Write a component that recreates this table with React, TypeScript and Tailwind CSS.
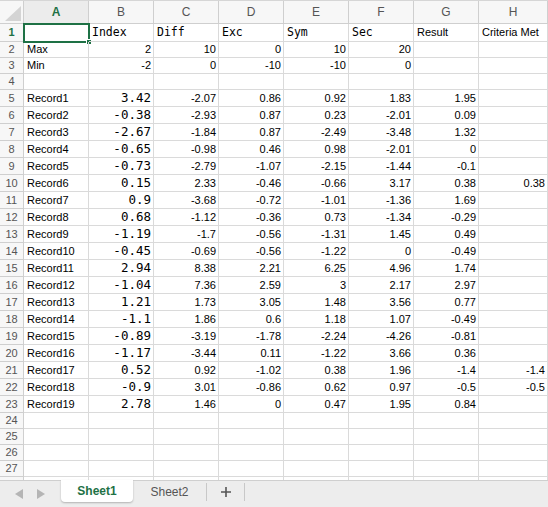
import React from 'react';

type Cell = { v: string; right?: boolean; mono?: boolean };

const colLetters = ['A', 'B', 'C', 'D', 'E', 'F', 'G', 'H'];
const colWidth = ['w-[65px]', 'w-[65px]', 'w-[65px]', 'w-[65px]', 'w-[65px]', 'w-[65px]', 'w-[65px]', 'w-[69px]'];

const records: string[][] = [
  ['3.42', '-2.07', '0.86', '0.92', '1.83', '1.95', ''],
  ['-0.38', '-2.93', '0.87', '0.23', '-2.01', '0.09', ''],
  ['-2.67', '-1.84', '0.87', '-2.49', '-3.48', '1.32', ''],
  ['-0.65', '-0.98', '0.46', '0.98', '-2.01', '0', ''],
  ['-0.73', '-2.79', '-1.07', '-2.15', '-1.44', '-0.1', ''],
  ['0.15', '2.33', '-0.46', '-0.66', '3.17', '0.38', '0.38'],
  ['0.9', '-3.68', '-0.72', '-1.01', '-1.36', '1.69', ''],
  ['0.68', '-1.12', '-0.36', '0.73', '-1.34', '-0.29', ''],
  ['-1.19', '-1.7', '-0.56', '-1.31', '1.45', '0.49', ''],
  ['-0.45', '-0.69', '-0.56', '-1.22', '0', '-0.49', ''],
  ['2.94', '8.38', '2.21', '6.25', '4.96', '1.74', ''],
  ['-1.04', '7.36', '2.59', '3', '2.17', '2.97', ''],
  ['1.21', '1.73', '3.05', '1.48', '3.56', '0.77', ''],
  ['-1.1', '1.86', '0.6', '1.18', '1.07', '-0.49', ''],
  ['-0.89', '-3.19', '-1.78', '-2.24', '-4.26', '-0.81', ''],
  ['-1.17', '-3.44', '0.11', '-1.22', '3.66', '0.36', ''],
  ['0.52', '0.92', '-1.02', '0.38', '1.96', '-1.4', '-1.4'],
  ['-0.9', '3.01', '-0.86', '0.62', '0.97', '-0.5', '-0.5'],
  ['2.78', '1.46', '0', '0.47', '1.95', '0.84', ''],
];

const blank = (): Cell[] => colLetters.map(() => ({ v: '' }));

const rows: { h: string; cells: Cell[]; label?: boolean }[] = [
  {
    h: 'h-[18px]',
    cells: [
      { v: '' },
      { v: 'Index', mono: true },
      { v: 'Diff', mono: true },
      { v: 'Exc', mono: true },
      { v: 'Sym', mono: true },
      { v: 'Sec', mono: true },
      { v: 'Result' },
      { v: 'Criteria Met' },
    ],
  },
  {
    h: 'h-[16px]',
    cells: [{ v: 'Max' }, ...['2', '10', '0', '10', '20'].map((v) => ({ v, right: true })), { v: '' }, { v: '' }],
  },
  {
    h: 'h-[16px]',
    cells: [{ v: 'Min' }, ...['-2', '0', '-10', '-10', '0'].map((v) => ({ v, right: true })), { v: '' }, { v: '' }],
  },
  { h: 'h-[16px]', cells: blank() },
  ...records.map((r, i) => ({
    h: 'h-[17px]',
    cells: [
      { v: `Record${i + 1}` },
      { v: r[0], right: true, mono: true },
      ...r.slice(1).map((v) => ({ v, right: true })),
    ],
  })),
  { h: 'h-[16px]', cells: blank() },
  { h: 'h-[16px]', cells: blank() },
  { h: 'h-[16px]', cells: blank() },
  { h: 'h-[16px]', cells: blank() },
  // row 28 is only a sliver above the tab bar
  { h: 'h-[16px]', cells: blank(), label: false },
];

function Corner() {
  return (
    <div className="w-[24px] h-full border-r border-b border-[#cfcfcf] bg-[#f7f7f7] flex items-end justify-end p-[2px]">
      <svg width="16" height="15" viewBox="0 0 16 15">
        <polygon points="16,0 16,15 0,15" fill="#d4d4d4" />
      </svg>
    </div>
  );
}

export default function App() {
  return (
    <div className="w-[548px] h-[507px] overflow-hidden bg-white flex flex-col font-['Liberation_Sans',Arial,sans-serif] text-[11px] text-black">
      <div className="flex-1 overflow-hidden">
        {/* column headers */}
        <div className="flex h-[24px] border-t border-[#d6d6d6]">
          <Corner />
          {colLetters.map((c, i) => (
            <div
              key={c}
              className={`${colWidth[i]} shrink-0 h-full flex items-center justify-center border-r border-b ${
                i === 0
                  ? 'bg-[#ececec] text-[#1e7145] font-bold border-b-[#1e7145]'
                  : 'bg-[#f7f7f7] text-[#555]'
              } border-[#cfcfcf] text-[12px]`}
            >
              {c}
            </div>
          ))}
        </div>

        {rows.map((row, ri) => (
          <div key={ri} className={`flex ${row.h}`}>
            <div
              className={`w-[24px] shrink-0 h-full flex items-center justify-center border-r border-b border-[#cfcfcf] bg-[#f7f7f7] ${
                ri === 0 ? 'text-[#1e7145] font-bold' : 'text-[#555]'
              } text-[11px]`}
            >
              {row.label === false ? '' : ri + 1}
            </div>
            {row.cells.map((cell, ci) => (
              <div
                key={ci}
                className={`${colWidth[ci]} shrink-0 h-full relative flex items-center whitespace-nowrap border-r border-b border-[#dadada] ${
                  cell.right ? 'justify-end pr-[2px]' : 'pl-[3px]'
                } ${cell.mono ? "font-['DejaVu_Sans_Mono',monospace] " + (ri === 0 ? 'text-[11.5px]' : 'text-[12.5px]') : ''}`}
              >
                {cell.v}
                {ri === 0 && ci === 0 && (
                  <div className="absolute -left-[1px] -top-[1px] w-[67px] h-[20px] border-2 border-[#1e7145]">
                    <div className="absolute -right-[4px] -bottom-[4px] w-[6px] h-[6px] bg-[#1e7145] border border-white" />
                  </div>
                )}
              </div>
            ))}
          </div>
        ))}
      </div>

      {/* sheet tabs */}
      <div className="h-[27px] shrink-0 bg-[#ededed] border-t border-[#cfcfcf] flex items-start relative">
        <div className="w-[61px] h-full flex items-center gap-[14px] pl-[15px] text-[#b5b5b5]">
          <svg width="8" height="10" viewBox="0 0 8 10">
            <polygon points="8,0 8,10 0,5" fill="currentColor" />
          </svg>
          <svg width="8" height="10" viewBox="0 0 8 10">
            <polygon points="0,0 0,10 8,5" fill="currentColor" />
          </svg>
        </div>
        <div className="w-[72px] h-[22px] -mt-[1px] bg-white rounded-b-[4px] shadow-[0_1px_2px_rgba(0,0,0,0.25)] flex items-center justify-center text-[12px] font-bold text-[#1e7145]">
          Sheet1
        </div>
        <div className="w-[74px] h-[18px] mt-[2px] flex items-center justify-center text-[12px] text-[#555] border-r border-[#c8c8c8]">
          Sheet2
        </div>
        <div className="w-[38px] h-[18px] mt-[2px] flex items-center justify-center border-r border-[#c8c8c8] text-[#555]">
          <svg width="12" height="12" viewBox="0 0 12 12">
            <path d="M6 1v10M1 6h10" stroke="currentColor" strokeWidth="1.6" />
          </svg>
        </div>
      </div>
    </div>
  );
}
